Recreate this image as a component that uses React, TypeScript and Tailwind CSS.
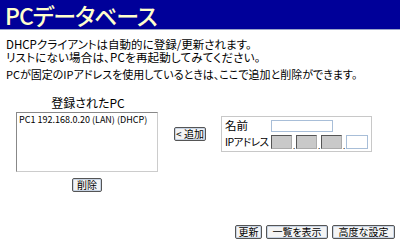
const jp = {
  fontFamily: '"MS UI Gothic", "Noto Sans CJK JP", sans-serif',
  fontFeatureSettings: '"palt"',
}

function SmallButton({ children, className = "" }: { children: React.ReactNode; className?: string }) {
  return (
    <button
      className={`h-[14px] flex items-center justify-center border border-[#555] rounded-[2px] bg-[#f4f4f4] text-[10px] leading-none text-black shadow-[inset_0_0_0_1px_#c8d4e4] px-[4px] whitespace-nowrap ${className}`}
      style={jp}
    >
      {children}
    </button>
  )
}

function GrayBox() {
  return <div className="w-[21px] h-[14px] bg-[#c9c9c9] border border-[#555] border-r-[#aaa] border-b-[#aaa]" />
}

function Dot() {
  return <span className="w-[4px] text-[8px] leading-none text-center self-end">.</span>
}

export default function App() {
  return (
    <div className="w-[400px] h-[244px] bg-white overflow-hidden text-black flex flex-col" style={jp}>
      <div className="h-[30px] shrink-0 bg-[#000099] border-b border-[#9aa4c8] flex items-center pl-[5px]">
        <h1 className="text-[23px] leading-[28px] font-medium text-[#ffffcc] tracking-[-1px]">PCデータベース</h1>
      </div>

      <div className="h-[66px] shrink-0 pl-[6px] pt-[8px] whitespace-nowrap">
        <p className="text-[11.5px] leading-[13px]">DHCPクライアントは自動的に登録/更新されます。</p>
        <p className="text-[11.5px] leading-[13px] tracking-[0.2px]">リストにない場合は、PCを再起動してみてください。</p>
        <p className="mt-[4px] text-[11px] leading-[13px]">PCが固定のIPアドレスを使用しているときは、ここで追加と削除ができます。</p>
      </div>

      <div className="h-[98px] shrink-0 flex pl-[16px]">
        <div className="w-[142px] flex flex-col items-center">
          <div className="text-[12px] leading-[14px] pl-[2px]">登録されたPC</div>
          <div className="mt-[2px] w-[142px] h-[60px] border border-[#888] border-r-[#ccc] border-b-[#ccc] bg-white text-[9px] leading-[12px] px-[2px] pt-[1px] whitespace-nowrap">
            PC1 192.168.0.20 (LAN) (DHCP)
          </div>
          <SmallButton className="mt-[6px] px-[3px]">削除</SmallButton>
        </div>

        <div className="ml-[16px] mt-[31px]">
          <SmallButton className="w-[32px] px-0">&lt; 追加</SmallButton>
        </div>

        <div className="ml-[15px] mt-[20px] h-[36px] w-[151px] border border-[#c8c8c8] px-[3px] pt-[2px] text-[11.5px] leading-none whitespace-nowrap">
          <div className="flex items-center h-[14px]">
            <span className="w-[46px]">名前</span>
            <div className="w-[62px] h-[12px] border border-[#a8bed8]" />
          </div>
          <div className="flex items-center h-[16px] mt-[1px]">
            <span className="w-[46px] text-[10.5px] tracking-[-0.5px]">IPアドレス</span>
            <GrayBox />
            <Dot />
            <GrayBox />
            <Dot />
            <GrayBox />
            <Dot />
            <div className="w-[22px] h-[14px] border border-[#a8bed8]" />
          </div>
        </div>
      </div>

      <div className="flex justify-end gap-[4px] pr-[5px] mt-[31px]">
        <SmallButton className="w-[27px] px-0">更新</SmallButton>
        <SmallButton className="w-[62px]">一覧を表示</SmallButton>
        <SmallButton className="w-[63px]">高度な設定</SmallButton>
      </div>
    </div>
  )
}
